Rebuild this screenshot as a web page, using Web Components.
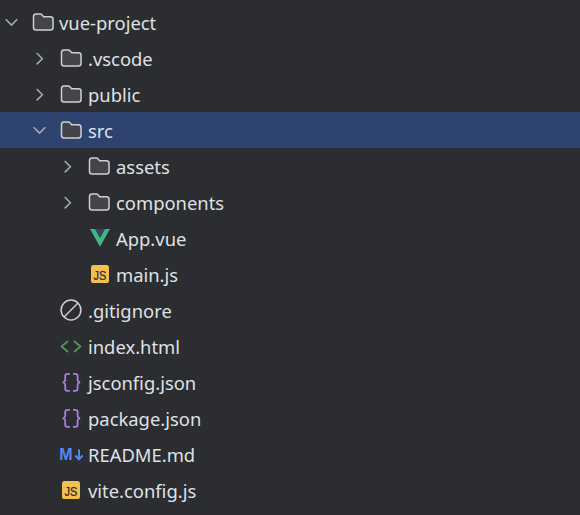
<!DOCTYPE html>
<html lang="en">
<head>
<meta charset="utf-8">
<title>Project tree</title>
<style>
html,body{margin:0;padding:0;background:#2b2d30;height:100%;overflow:hidden}
</style>
</head>
<body>
<template id="tree-row-t">
<style>
:host{display:flex;align-items:center;height:36px;padding-left:calc(var(--depth,0)*28px);color:#dfe1e5;font:18.4px/36px "Noto Sans","Open Sans",sans-serif;white-space:nowrap;box-sizing:border-box}
:host([selected]){background:#2e436e}
.chev{width:24px;height:24px;flex:none;margin-right:7px}
.icon{width:24px;height:24px;flex:none;margin-right:5px}
:host([depth="0"]) .icon{margin-right:4px}
:host([nudge]) .icon{margin-left:1px;margin-right:4px}
svg{display:block;width:24px;height:24px;fill:none}
.label{padding-top:2px}
</style>
<span class="chev"></span>
<span class="icon"></span>
<span class="label"><slot></slot></span>
</template>
<template id="i-folder"><svg viewBox="0 0 24 24"><path d="M2.500 6.600C2.500 5 3.600 4 5 4h4.200c.8 0 1.400.3 1.900.9l1.500 1.900h6.900c1.500 0 2.500 1 2.500 2.500v8.200c0 1.500-1 2.500-2.500 2.500H5c-1.400 0-2.500-1-2.500-2.500z" fill="#43454a" stroke="#ced0d6" stroke-width="1.500"/></svg></template>
<template id="i-down"><svg viewBox="0 0 24 24"><path d="M5.700 9.300l5.800 5.800 5.800-5.800" stroke="#a8abb2" stroke-width="1.500"/></svg></template>
<template id="i-right"><svg viewBox="0 0 24 24"><path d="M8.700 7l5.700 5.700-5.700 5.700" stroke="#a8abb2" stroke-width="1.500"/></svg></template>
<template id="i-vue"><svg viewBox="0 0 24 24"><path d="M3 3h20L13 20.700z" fill="#41b883"/><path d="M7.800 3h10.400L13 12.200z" fill="#32485a"/></svg></template>
<template id="i-js"><svg viewBox="0 0 24 24"><rect x="3" y="3" width="18" height="18" rx="2.600" fill="#f4bf4f"/><text transform="translate(12 17.500) scale(.88 1)" text-anchor="middle" font-family="'Liberation Sans',sans-serif" font-size="12.500" font-weight="400" stroke="#2b2d30" stroke-width=".25" fill="#2b2d30">JS</text></svg></template>
<template id="i-ignore"><svg viewBox="0 0 24 24"><circle cx="12" cy="12" r="9.900" stroke="#ced0d6" stroke-width="1.500"/><path d="M5 19L19 5" stroke="#ced0d6" stroke-width="1.500"/></svg></template>
<template id="i-html"><svg viewBox="0 0 24 24"><path d="M9 7L2.500 12.500 9 18M15 7l6.500 5.500L15 18" stroke="#57965c" stroke-width="1.700"/></svg></template>
<template id="i-json"><svg viewBox="0 0 24 24"><path d="M10.800 3.800H8.600C7 3.800 6.200 4.600 6.200 6v3.800c0 1.200-.8 2.100-2.400 2.500 1.600.4 2.400 1.300 2.400 2.500v3.800c0 1.400.8 2.300 2.400 2.300h2.200M14 3.800h2.200c1.600 0 2.400.8 2.400 2.200v3.800c0 1.200.8 2.100 2.400 2.500-1.600.4-2.400 1.300-2.400 2.500v3.800c0 1.400-.8 2.300-2.400 2.300H14" stroke="#a57fdc" stroke-width="1.800"/></svg></template>
<template id="i-md"><svg viewBox="0 0 24 24"><text x="0.200" y="18" font-family="'Liberation Sans',sans-serif" font-size="16" font-weight="700" fill="#548af7">M</text><path d="M20 7.500v10M16.300 13.500l3.700 3.900 3.700-3.900" stroke="#548af7" stroke-width="1.900"/></svg></template>
<script>
class TreeRow extends HTMLElement{
  constructor(){
    super();
    const root=this.attachShadow({mode:'open'});
    root.appendChild(document.getElementById('tree-row-t').content.cloneNode(true));
  }
  connectedCallback(){
    this.style.setProperty('--depth',this.getAttribute('depth')||0);
    const r=this.shadowRoot;
    const put=(sel,id)=>{ const h=r.querySelector(sel); if(id&&!h.firstChild) h.appendChild(document.getElementById('i-'+id).content.cloneNode(true)); };
    put('.chev',this.getAttribute('chevron'));
    put('.icon',this.getAttribute('icon'));
  }
}
class FileTree extends HTMLElement{
  constructor(){
    super();
    this.attachShadow({mode:'open'}).innerHTML='<style>:host{display:block;padding-top:4px}</style><slot></slot>';
  }
}
customElements.define('tree-row',TreeRow);
customElements.define('file-tree',FileTree);
const rows=[[0,'down','folder','vue-project'],[1,'right','folder','.vscode'],[1,'right','folder','public'],[1,'down','folder','src',1],[2,'right','folder','assets'],[2,'right','folder','components'],[2,'','vue','App.vue'],[2,'','js','main.js',0,1],[1,'','ignore','.gitignore'],[1,'','html','index.html'],[1,'','json','jsconfig.json'],[1,'','json','package.json'],[1,'','md','README.md'],[1,'','js','vite.config.js']];
const tree=document.createElement('file-tree');
for(const [d,c,i,t,s,n] of rows){
  const el=document.createElement('tree-row');
  el.setAttribute('depth',d);
  if(c)el.setAttribute('chevron',c);
  el.setAttribute('icon',i);
  if(s)el.setAttribute('selected','');
  if(n)el.setAttribute('nudge','');
  el.textContent=t;
  tree.appendChild(el);
}
document.body.appendChild(tree);
</script>
</body>
</html>
